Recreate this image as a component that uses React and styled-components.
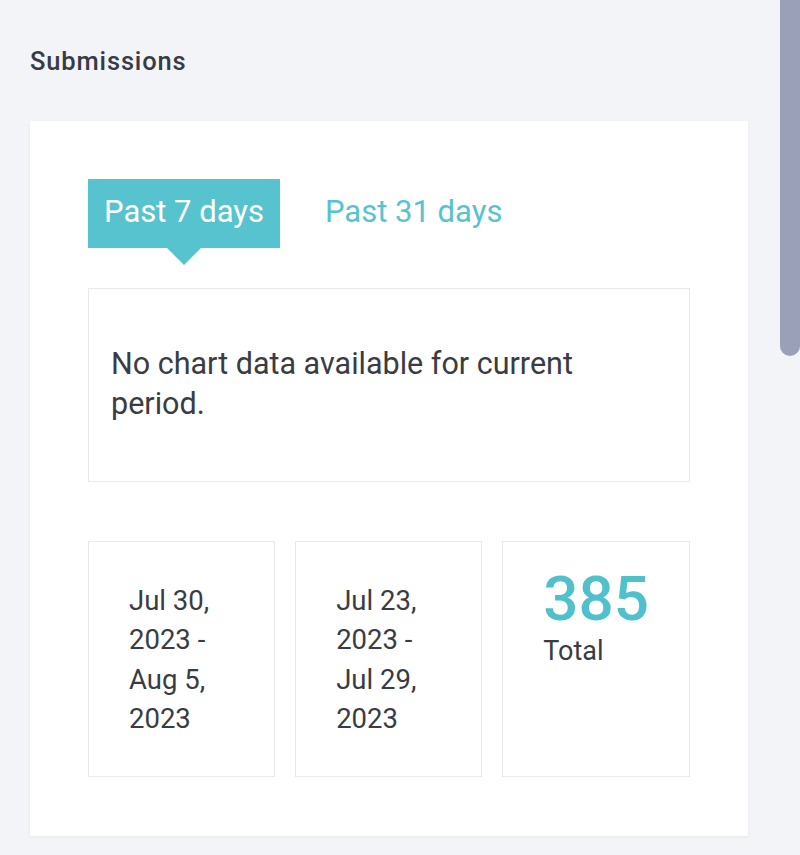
import React from 'react'
import styled, { createGlobalStyle } from 'styled-components'

const GlobalStyle = createGlobalStyle`
    html, body {
        margin: 0;
        padding: 0;
        background: #f3f4f8;
        font-family: Roboto, "Noto Sans", sans-serif;
    }
`

const ranges = [
    ['Jul 30,', '2023 -', 'Aug 5,', '2023'],
    ['Jul 23,', '2023 -', 'Jul 29,', '2023'],
]

export default function App() {
    return (
        <>
            <GlobalStyle />
            <StyledPage>
                <StyledTitle>Submissions</StyledTitle>
                <StyledCard>
                    <StyledTabs>
                        <StyledTab active>Past 7 days</StyledTab>
                        <StyledTab>Past 31 days</StyledTab>
                    </StyledTabs>
                    <StyledChartBox>
                        No chart data available for current period.
                    </StyledChartBox>
                    <StyledStats>
                        {ranges.map((lines, i) => (
                            <StyledStatBox key={i}>
                                {lines.map((l, j) => <div key={j}>{l}</div>)}
                            </StyledStatBox>
                        ))}
                        <StyledStatBox total>
                            <StyledNumber>385</StyledNumber>
                            <StyledTotalLabel>Total</StyledTotalLabel>
                        </StyledStatBox>
                    </StyledStats>
                </StyledCard>
            </StyledPage>
            <StyledScrollThumb />
        </>
    )
}

const StyledPage = styled.div`
    box-sizing: border-box;
    min-height: 855px;
    padding: 46px 52px 19px 30px;
`

const StyledTitle = styled.h2`
    margin: 0 0 45px 0;
    font-size: 25.5px;
    font-weight: 500;
    letter-spacing: 0.85px;
    color: #383a45;
    line-height: 30px;
`

const StyledCard = styled.div`
    box-sizing: border-box;
    width: 718px;
    background: #ffffff;
    padding: 58px 58px 59px 58px;
    box-shadow: 0 1px 3px rgba(0, 0, 0, 0.05);
`

const StyledTabs = styled.div`
    display: flex;
    align-items: center;
    gap: 29px;
    height: 69px;
    margin-bottom: 40px;
`

const StyledTab = styled.div`
    position: relative;
    height: 69px;
    display: flex;
    align-items: center;
    padding: 0 16px 4px 16px;
    box-sizing: border-box;
    font-size: 31px;
    color: ${p => (p.active ? '#ffffff' : '#56c3cf')};
    background: ${p => (p.active ? '#56c3cf' : 'transparent')};
    &::after {
        content: '';
        display: ${p => (p.active ? 'block' : 'none')};
        position: absolute;
        left: 50%;
        bottom: -17px;
        margin-left: -17px;
        border-left: 17px solid transparent;
        border-right: 17px solid transparent;
        border-top: 17px solid #56c3cf;
    }
`

const StyledChartBox = styled.div`
    box-sizing: border-box;
    height: 194px;
    border: 1.5px solid #e8e9ed;
    padding: 55px 22px;
    font-size: 30.5px;
    line-height: 40px;
    color: #3a3c44;
`

const StyledStats = styled.div`
    display: grid;
    grid-template-columns: repeat(3, 1fr);
    gap: 20px;
    margin-top: 59px;
`

const StyledStatBox = styled.div`
    box-sizing: border-box;
    height: 236px;
    border: 1.5px solid #e8e9ed;
    padding: ${p => (p.total ? '22px 40px' : '39px 40px')};
    font-size: 27.5px;
    line-height: 39.3px;
    color: #3a3c44;
`

const StyledNumber = styled.div`
    font-size: 62px;
    font-weight: 500;
    line-height: 70px;
    color: #4fc0cc;
`

const StyledTotalLabel = styled.div`
    font-size: 27px;
    line-height: 34px;
    color: #3a3c44;
`

const StyledScrollThumb = styled.div`
    position: fixed;
    top: 0;
    right: 0;
    width: 20px;
    height: 356px;
    background: #9aa0b8;
    border-radius: 0 0 10px 10px;
`
